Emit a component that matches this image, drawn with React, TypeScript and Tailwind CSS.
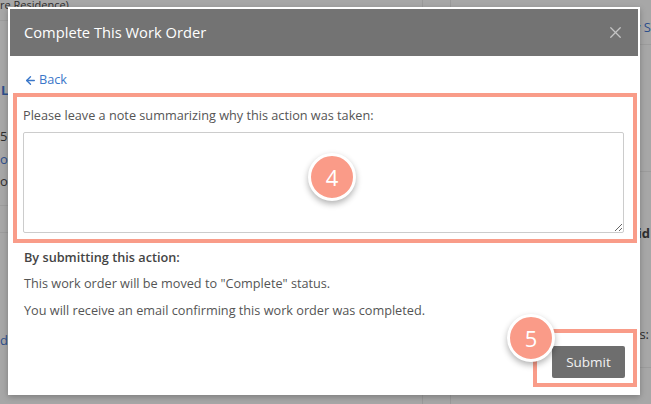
import { ArrowLeft, X } from "lucide-react";

const font = { fontFamily: '"Open Sans", "Noto Sans", sans-serif' };

function Badge({ n, className }: { n: number; className: string }) {
  return (
    <div
      className={`absolute flex h-[48px] w-[48px] items-center justify-center rounded-full border-[3px] border-white bg-[#fa9b88] text-[22px] text-white shadow-[0_3px_6px_rgba(0,0,0,0.3)] ${className}`}
    >
      {n}
    </div>
  );
}

// the page behind the dimmed overlay, only slivers of it show
function BackgroundPage() {
  return (
    <div className="flex h-full w-full text-[13px] text-[#2e2e2e]">
      <div className="flex w-[423px] flex-col border-r border-[#9a9a9a]">
        <div className="h-[20px] whitespace-nowrap text-[11px] leading-[9px]">re Residence)</div>
        <div className="h-px bg-[#9c9c9c]" />
        <div className="mt-[60px] pl-[1px] font-bold text-[#2d4f8c]">L</div>
        <div className="mt-[26px]">5°.</div>
        <div className="mt-[4px] text-[#2d4f8c]">orl</div>
        <div className="mt-[2px]">os</div>
        <div className="mt-[14px] h-px bg-[#9c9c9c]" />
        <div className="mt-[26px] h-px bg-[#9c9c9c]" />
        <div className="mt-[98px] text-[#2d4f8c]">d</div>
      </div>
      <div className="w-[28px] border-r border-[#9a9a9a]" />
      <div className="flex flex-1 flex-col items-end overflow-hidden">
        <div className="mt-[18px] whitespace-nowrap text-[#2d4f8c]">y S</div>
        <div className="mt-[6px] h-px w-full bg-[#9c9c9c]" />
        <div className="mt-[126px] h-px w-full bg-[#9c9c9c]" />
        <div className="mt-[52px] whitespace-nowrap pr-[1px] font-bold">id</div>
        <div className="mt-[82px] whitespace-nowrap pr-[2px]">s:</div>
        <div className="mt-[22px] h-px w-full bg-[#9c9c9c]" />
      </div>
    </div>
  );
}

export default function App() {
  return (
    <div className="relative h-[404px] w-[651px] overflow-hidden bg-[#a7a7a7]" style={font}>
      <BackgroundPage />

      <div className="absolute left-[8px] top-[7px] flex h-[388px] w-[632px] flex-col bg-white p-[2px] shadow-[0_2px_6px_rgba(0,0,0,0.25)]">
        <div className="flex h-[47px] items-center justify-between bg-[#737373] pl-[14px] pr-[13px]">
          <h2 className="text-[14.7px] text-white">Complete This Work Order</h2>
          <X className="h-[19px] w-[19px] text-[#c4c4c4]" strokeWidth={1.6} />
        </div>

        <div className="flex flex-col pl-[3px] pr-[1px] text-[12.7px] text-[#555]">
          <a className="ml-[11px] mt-[15px] flex h-[18px] items-center gap-[2px] text-[#3a77c9]">
            <ArrowLeft className="h-[13px] w-[13px]" strokeWidth={2.5} />
            Back
          </a>

          <div className="relative mt-[4px] border-[4px] border-[#f99c89] pb-[6px] pl-[6px] pr-[9px] pt-[9px]">
            <p className="h-[18px] leading-[18px]">Please leave a note summarizing why this action was taken:</p>
            <textarea className="mt-[8px] block h-[101px] w-full resize-y rounded-[2px] border border-[#cccccc] bg-white outline-none" />
            <Badge n={4} className="left-[291px] top-[56px]" />
          </div>

          <p className="ml-[11px] mt-[5px] h-[18px] font-semibold leading-[18px] text-[#444]">By submitting this action:</p>
          <p className="ml-[11px] mt-[8px] h-[18px] leading-[18px]">This work order will be moved to "Complete" status.</p>
          <p className="ml-[11px] mt-[9px] h-[18px] leading-[18px]">You will receive an email confirming this work order was completed.</p>

          <div className="mt-[10px] flex justify-end">
            <div className="relative h-[58px] w-[104px] border-[4px] border-[#f99c89] pl-[15px] pt-[13px]">
              <button className="flex h-[32px] w-[73px] items-center justify-center rounded-[2px] bg-[#6e6e6e] text-[13.5px] text-[#f2f2f2]">
                Submit
              </button>
              <Badge n={5} className="-left-[30px] -top-[19px]" />
            </div>
          </div>
        </div>
      </div>
    </div>
  );
}
